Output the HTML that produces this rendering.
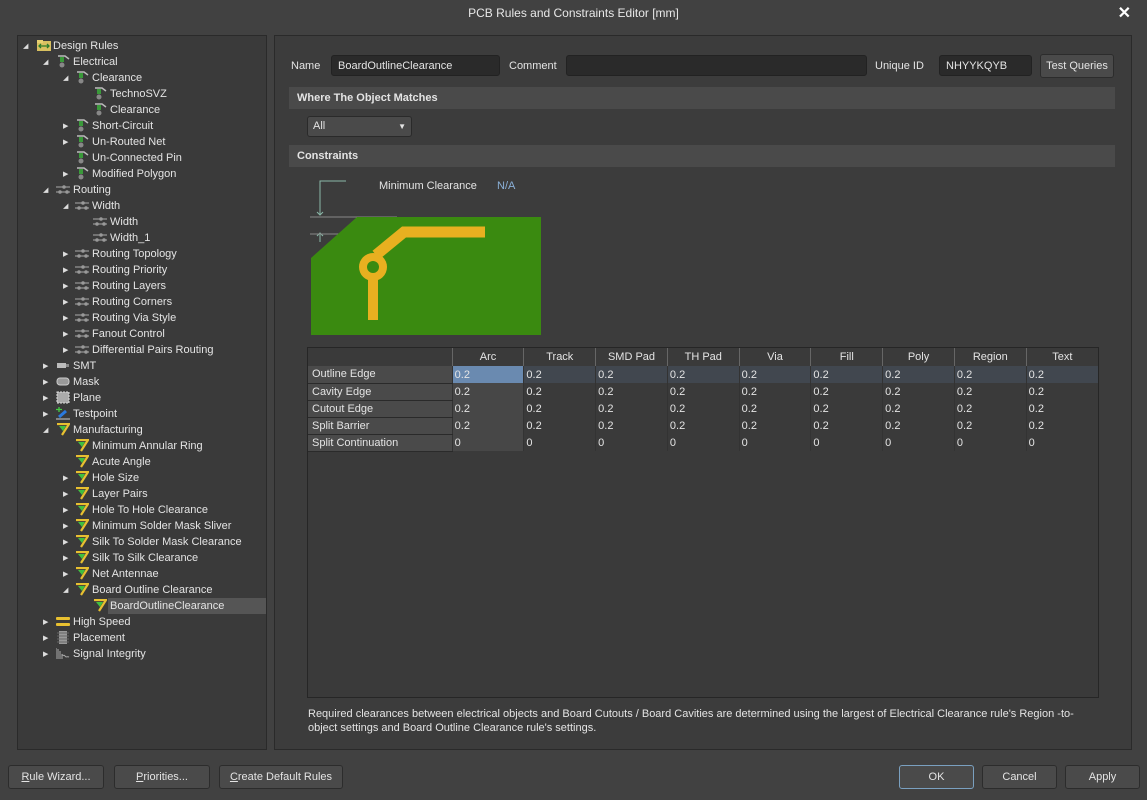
<!DOCTYPE html>
<html><head><style>
*{box-sizing:border-box;margin:0;padding:0}
body{width:1147px;height:800px;background:#414141;font-family:"Liberation Sans",sans-serif;font-size:11px;color:#e4e4e4;position:relative;overflow:hidden}
.abs{position:absolute}
.title{left:0;top:0;width:1147px;height:26px;text-align:center;line-height:26px;font-size:12px;color:#e8e8e8}
.close{right:16px;top:3px;font-size:16px;font-weight:bold;color:#fff}
.left{left:17px;top:35px;width:250px;height:715px;background:#3a3a3a;border:1px solid #2a2a2a}
.right{left:274px;top:35px;width:858px;height:715px;background:#3c3c3c;border:1px solid #2a2a2a}
.row{position:absolute;height:16px;line-height:16px;white-space:nowrap}
.arr{position:absolute;font-size:7px;color:#ddd}
.ico{position:absolute;width:14px;height:13px;top:1px}
.inp{background:#2a2a2a;border:1px solid #222;border-radius:3px;height:21px;line-height:20px;padding-left:6px}
.sec{left:289px;width:826px;height:22px;background:#4a4a4a;font-weight:bold;line-height:22px;padding-left:8px}
.btn{background:#4a4a4a;border:1px solid #2c2c2c;border-radius:3px;text-align:center;line-height:22px;height:24px}
table{border-collapse:collapse;table-layout:fixed}
td{overflow:hidden;white-space:nowrap}
</style></head><body>
<div class="abs title">PCB Rules and Constraints Editor [mm]</div>
<div class="abs close">✕</div>

<div class="abs left"></div>
<div class="abs" style="left:108px;top:598px;width:158px;height:16px;background:#555"></div>
<div id="tree"></div>

<script>
var items=[
[0,'d','Design Rules','f'],
[1,'d','Electrical','e'],
[2,'d','Clearance','e'],
[3,'','TechnoSVZ','e'],
[3,'','Clearance','e'],
[2,'r','Short-Circuit','e'],
[2,'r','Un-Routed Net','e'],
[2,'','Un-Connected Pin','e'],
[2,'r','Modified Polygon','e'],
[1,'d','Routing','w'],
[2,'d','Width','w'],
[3,'','Width','w'],
[3,'','Width_1','w'],
[2,'r','Routing Topology','w'],
[2,'r','Routing Priority','w'],
[2,'r','Routing Layers','w'],
[2,'r','Routing Corners','w'],
[2,'r','Routing Via Style','w'],
[2,'r','Fanout Control','w'],
[2,'r','Differential Pairs Routing','w'],
[1,'r','SMT','s'],
[1,'r','Mask','m'],
[1,'r','Plane','p'],
[1,'r','Testpoint','t'],
[1,'d','Manufacturing','y'],
[2,'','Minimum Annular Ring','y'],
[2,'','Acute Angle','y'],
[2,'r','Hole Size','y'],
[2,'r','Layer Pairs','y'],
[2,'r','Hole To Hole Clearance','y'],
[2,'r','Minimum Solder Mask Sliver','y'],
[2,'r','Silk To Solder Mask Clearance','y'],
[2,'r','Silk To Silk Clearance','y'],
[2,'r','Net Antennae','y'],
[2,'d','Board Outline Clearance','y'],
[3,'','BoardOutlineClearance','y'],
[1,'r','High Speed','h'],
[1,'r','Placement','pl'],
[1,'r','Signal Integrity','si']];
var icons={
f:'<svg class="ico" viewBox="0 0 14 13"><rect x="0" y="2" width="14" height="10" fill="#d8c060"/><rect x="0" y="1" width="6" height="3" fill="#e8d070"/><path d="M3 7h8M4 5l-2 2 2 2M10 5l2 2-2 2" stroke="#2a7a2a" stroke-width="1.3" fill="none"/></svg>',
e:'<svg class="ico" viewBox="0 0 14 13"><path d="M2 1h7l4 3" stroke="#bbb" stroke-width="1.5" fill="none"/><rect x="4" y="2" width="4" height="5" fill="#3a9a3a"/><circle cx="6" cy="10" r="2.5" fill="#888"/></svg>',
w:'<svg class="ico" viewBox="0 0 14 13"><path d="M0 4h14M0 9h14" stroke="#aaa" stroke-width="1"/><circle cx="8" cy="4" r="1.8" fill="#999"/><circle cx="4" cy="9" r="1.8" fill="#999"/><circle cx="11" cy="9" r="1.8" fill="#999"/></svg>',
y:'<svg class="ico" viewBox="0 0 14 13"><path d="M1 1h12l-7 11" stroke="#e8c030" stroke-width="2.2" fill="none"/><path d="M3 3h7l-3 5z" fill="#40c040"/></svg>',
s:'<svg class="ico" viewBox="0 0 14 13"><rect x="1" y="4" width="9" height="5" fill="#bbb"/><rect x="10" y="5" width="3" height="3" fill="#888"/></svg>',
m:'<svg class="ico" viewBox="0 0 14 13"><rect x="1" y="3" width="12" height="7" rx="3" fill="#999" stroke="#ccc"/></svg>',
p:'<svg class="ico" viewBox="0 0 14 13"><rect x="1" y="1" width="12" height="11" fill="#aaa" stroke="#ddd" stroke-dasharray="2 1"/></svg>',
t:'<svg class="ico" viewBox="0 0 14 13"><path d="M3 10l7-6" stroke="#2a7ae0" stroke-width="3"/><path d="M3 0v5M0 2.5h6" stroke="#4c4" stroke-width="1.3"/><path d="M0 12h14" stroke="#ccc"/></svg>',
h:'<svg class="ico" viewBox="0 0 14 13"><rect x="0" y="2" width="14" height="3" rx="1" fill="#e8c030"/><rect x="0" y="8" width="14" height="3" rx="1" fill="#e8c030"/></svg>',
pl:'<svg class="ico" viewBox="0 0 14 13"><rect x="3" y="0" width="8" height="13" fill="#999"/><path d="M1 2h12M1 5h12M1 8h12M1 11h12" stroke="#666"/></svg>',
si:'<svg class="ico" viewBox="0 0 14 13"><path d="M0 12V1M2 12V2M4 12V4M6 12V7c1 3 2 0 3 2s2 0 4 1" stroke="#aaa" fill="none"/></svg>'};
var h='';
items.forEach(function(it,i){
 var lv=it[0];
 var ax=[23,43,63,83][lv],ix=[37,56,75,93][lv],tx=[53,73,92,110][lv];
 var top=38+i*16;
 if(it[1]) h+='<div class="arr" style="left:'+ax+'px;top:'+(top+4)+'px">'+(it[1]=='d'?'◢':'▶')+'</div>';
 h+='<div class="abs" style="left:'+ix+'px;top:'+top+'px;width:14px;height:16px">'+icons[it[3]]+'</div>';
 h+='<div class="row" style="left:'+tx+'px;top:'+top+'px">'+it[2]+'</div>';
});
document.getElementById('tree').innerHTML=h;
</script>

<div class="abs right"></div>
<div class="abs" style="left:291px;top:60px">Name</div>
<div class="abs inp" style="left:331px;top:55px;width:169px">BoardOutlineClearance</div>
<div class="abs" style="left:509px;top:60px">Comment</div>
<div class="abs inp" style="left:566px;top:55px;width:301px"></div>
<div class="abs" style="left:875px;top:60px">Unique ID</div>
<div class="abs inp" style="left:939px;top:55px;width:93px">NHYYKQYB</div>
<div class="abs btn" style="left:1040px;top:54px;width:74px">Test Queries</div>

<div class="abs sec" style="top:87px">Where The Object Matches</div>
<div class="abs" style="left:307px;top:116px;width:105px;height:21px;background:#4a4a4a;border:1px solid #2a2a2a;border-radius:3px;padding-left:5px;line-height:19px">All<span style="position:absolute;right:5px;top:0;font-size:8px">▼</span></div>
<div class="abs sec" style="top:145px">Constraints</div>

<svg class="abs" style="left:307px;top:175px" width="240" height="165" viewBox="0 0 240 165">
 <path d="M39 6H13V40M10 37l3 3 3-3M13 58V67M10 61l3-3 3 3" stroke="#8ab8a8" fill="none"/>
 <path d="M3 42H90M3 59H50" stroke="#888"/>
 <path d="M50 42H234V160H4V83Z" fill="#3a8a10"/>
 <path d="M69 80L97 57H178" stroke="#e8b020" stroke-width="11" fill="none"/>
 <path d="M66 90V145" stroke="#e8b020" stroke-width="10"/>
 <circle cx="66" cy="92" r="14" fill="#e8b020"/><circle cx="66" cy="92" r="6" fill="#3a8a10"/>
</svg>
<div class="abs" style="left:379px;top:180px">Minimum Clearance</div>
<div class="abs" style="left:497px;top:180px;color:#8ab0d8">N/A</div>

<div class="abs" style="left:307px;top:347px;width:792px;height:351px;background:#3a3a3a;border:1px solid #262626"></div>
<table class="abs" style="left:308px;top:348px;width:790px">
<colgroup><col style="width:144px"><col span="9" style="width:71.7px"></colgroup>
<tr style="height:18px"><td></td>
<script>
var cols=['Arc','Track','SMD Pad','TH Pad','Via','Fill','Poly','Region','Text'];
document.write(cols.map(function(c){return '<td style="text-align:center;border-left:1px solid #666;background:#3a3a3a">'+c+'</td>'}).join(''));
</script></tr>
<script>
var rows=['Outline Edge','Cavity Edge','Cutout Edge','Split Barrier','Split Continuation'];
rows.forEach(function(r,i){
 var s='<tr style="height:17px"><td style="background:#4a4a4a;border-bottom:1px solid #2a2a2a;padding-left:4px">'+r+'</td>';
 for(var j=0;j<9;j++){var bg=i==0?(j==0?'#6a8ab0':'#41474f'):(j==0?'#474747':'#3a3a3a');s+='<td style="background:'+bg+';padding-left:2px;border-left:1px solid #333">'+(i==4?'0':'0.2')+'</td>';}
 document.write(s+'</tr>');
});
</script>
</table>

<div class="abs" style="left:308px;top:707px;width:770px;line-height:14px;font-size:11px">Required clearances between electrical objects and Board Cutouts / Board Cavities are determined using the largest of Electrical Clearance rule's Region -to- object settings and Board Outline Clearance rule's settings.</div>

<div class="abs btn" style="left:8px;top:765px;width:96px"><u>R</u>ule Wizard...</div>
<div class="abs btn" style="left:114px;top:765px;width:96px"><u>P</u>riorities...</div>
<div class="abs btn" style="left:219px;top:765px;width:124px"><u>C</u>reate Default Rules</div>
<div class="abs btn" style="left:899px;top:765px;width:75px;border-color:#7aa0c0">OK</div>
<div class="abs btn" style="left:982px;top:765px;width:75px">Cancel</div>
<div class="abs btn" style="left:1065px;top:765px;width:75px">Apply</div>
</body></html>
